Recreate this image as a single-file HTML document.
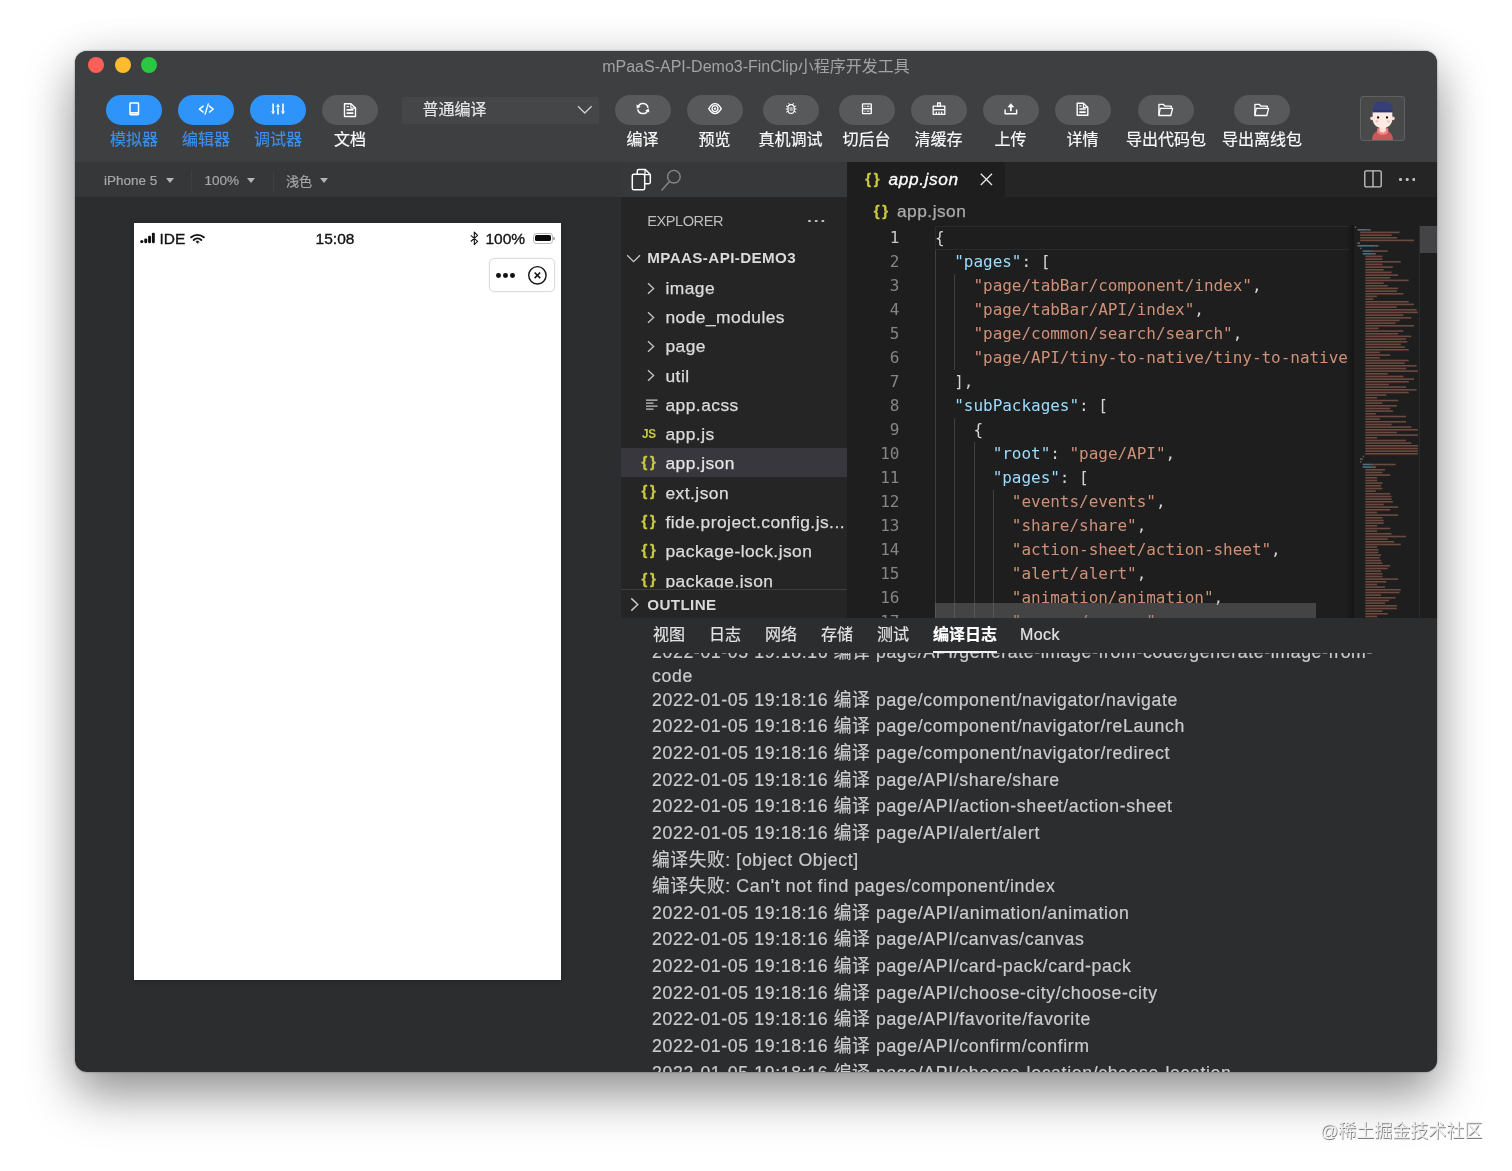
<!DOCTYPE html>
<html lang="zh-CN">
<head>
<meta charset="utf-8">
<title>mPaaS-API-Demo3-FinClip小程序开发工具</title>
<style>
*{box-sizing:border-box;margin:0;padding:0}
html,body{width:1512px;height:1171px;overflow:hidden;background:#fff}
body{position:relative;font-family:"Liberation Sans","Noto Sans CJK SC",sans-serif;-webkit-font-smoothing:antialiased}
.abs{position:absolute}
#shadow{position:absolute;left:75px;top:51px;width:1362px;height:1021px;border-radius:12px;
 box-shadow:0 23px 50px rgba(0,0,0,.40),0 4px 46px rgba(0,0,0,.09),0 0 2px rgba(0,0,0,.45)}
#win{position:absolute;left:75px;top:51px;width:1362px;height:1021px;border-radius:12px;overflow:hidden;background:#2c2d2f}
#in{position:absolute;left:-75px;top:-51px;width:1512px;height:1171px;will-change:transform}
.t{position:absolute;white-space:nowrap;line-height:1;transform:translateY(-50%)}
.tc{position:absolute;white-space:nowrap;line-height:1;transform:translate(-50%,-50%)}
/* toolbar */
#top{left:75px;top:51px;width:1362px;height:111px;background:#3e3f41}
.pill{position:absolute;top:95.3px;width:56.4px;height:29.9px;border-radius:15.2px;background:#58595b}
.pill.on{background:#2e94f9}
.pill svg{position:absolute;left:0;top:.3px;width:56px;height:29px;overflow:visible}
.lbl{font-size:16px;color:#fafafa;top:139.6px;-webkit-text-stroke:.2px}
.lbl.on{color:#3b8ee9}
/* code */
.ln{position:absolute;left:847px;width:52.5px;text-align:right;font:16px/24px "DejaVu Sans Mono","Liberation Mono",monospace;color:#858585;height:24px}
.cl{position:absolute;left:935px;font:16px/24px "DejaVu Sans Mono","Liberation Mono",monospace;color:#d4d4d4;height:24px;white-space:pre;letter-spacing:-0.03px}
.k{color:#9cdcfe}.s{color:#ce9178}
.ig{position:absolute;width:1px;background:#404040}
/* explorer */
.fi{position:absolute;left:665.5px;font-size:17.4px;letter-spacing:.45px;margin-top:.7px;-webkit-text-stroke:.25px #dcdcdc;color:#dcdcdc;white-space:nowrap;line-height:1;transform:translateY(-50%)}
.br{position:absolute;left:641.5px;font:bold 15px "Liberation Sans",sans-serif;color:#cbcb41;line-height:1;transform:translateY(-50%);letter-spacing:2.7px;white-space:nowrap;-webkit-text-stroke:.3px #cbcb41}
/* log */
.lg{position:absolute;left:652px;font-size:17.7px;letter-spacing:.63px;color:#cbcbcb;-webkit-text-stroke:.2px;white-space:nowrap;line-height:1;transform:translateY(-50%)}
.tab{font-size:16px;color:#e2e2e2;top:634.5px;-webkit-text-stroke:.2px}
</style>
</head>
<body>
<div id="shadow"></div>
<div id="win"><div id="in">
<!-- title bar + toolbar -->
<div class="abs" id="top"></div>
<div class="abs" style="left:88px;top:57px;width:16px;height:16px;border-radius:50%;background:#fe5f57"></div>
<div class="abs" style="left:114.5px;top:57px;width:16px;height:16px;border-radius:50%;background:#febc2e"></div>
<div class="abs" style="left:141px;top:57px;width:16px;height:16px;border-radius:50%;background:#28c840"></div>
<div class="tc" id="title" style="left:756px;top:66.5px;font-size:16px;color:#a2a3a5">mPaaS-API-Demo3-FinClip小程序开发工具</div>

<!-- left group -->
<div class="pill on" style="left:106px"><svg viewBox="0 0 56 29" fill="none" stroke="#fff" stroke-width="1.300"><rect x="24" y="7.100" width="8.500" height="11.600" rx="0.700" stroke-width="1.500"/><path d="M24 16.900h8.500" stroke-width="1.700"/></svg></div>
<div class="pill on" style="left:178px"><svg viewBox="0 0 56 29" fill="none" stroke="#fff" stroke-width="1.400" stroke-linecap="round" stroke-linejoin="round"><path d="M25.200 10.100 21.400 13.100 25.200 16.100M31.400 10.100 35.200 13.100 31.400 16.100M30.300 7.900 27.100 18.100"/></svg></div>
<div class="pill on" style="left:250px"><svg viewBox="0 0 56 29" fill="#fff" stroke="#fff" stroke-width="1.600"><path d="M23.100 7.500v7.500M28 11.300v7.300M33 7.500v7.500" fill="none"/><path d="M21.100 15.200h4L23.100 18.600zM31 15.200h4L33 18.600zM26 10.900h4L28 7.500z" stroke="none"/></svg></div>
<div class="pill" style="left:322px"><svg viewBox="0 0 56 29" fill="none" stroke="#fff" stroke-width="1.400" stroke-linejoin="round"><path d="M22.500 7.700h6.400l4.600 4.400v8.400H22.500z"/><path d="M28.900 7.700v4.400h4.600" stroke-width="1.100"/><path d="M24.600 10.600h2.200" stroke-width="1.300"/><path d="M24.600 13.900h6.800M24.600 17.200h6.800" stroke-width="1.700"/></svg></div>
<div class="tc lbl on" style="left:134px">模拟器</div>
<div class="tc lbl on" style="left:206px">编辑器</div>
<div class="tc lbl on" style="left:278px">调试器</div>
<div class="tc lbl" style="left:350px">文档</div>

<!-- dropdown -->
<div class="abs" style="left:402px;top:97px;width:197px;height:27px;background:#454648;border-radius:2px"></div>
<div class="t" style="left:422.5px;top:110px;font-size:16px;color:#e4e4e4;-webkit-text-stroke:.2px">普通编译</div>
<svg class="abs" style="left:576px;top:103px" width="18" height="14" viewBox="0 0 18 14" fill="none" stroke="#d0d0d0" stroke-width="1.3"><path d="M2 3.2 8.8 10 15.6 3.2"/></svg>
<!-- right group -->
<div class="pill" style="left:614.500px"><svg viewBox="0 0 56 29" fill="none" stroke="#fff" stroke-width="1.500"><g transform="translate(56.300,-0.600) scale(-1,1)"><path d="M23.300 12.500A5.200 5.200 0 0 1 33.300 11.600"/><path d="M33.500 13.900A5.200 5.200 0 0 1 23.500 14.800"/><path d="M34.900 9.200l-.5 4.200-3.700-2z" fill="#fff" stroke="none"/><path d="M21.900 17.200l.5-4.200 3.700 2z" fill="#fff" stroke="none"/></g></svg></div>
<div class="pill" style="left:686.500px"><svg viewBox="0 0 56 29" fill="none" stroke="#fff" stroke-width="1.400"><g transform="translate(-0.300,-0.300)"><path d="M22.100 12.900C24.100 9.300 26 7.900 28.300 7.900s4.200 1.400 6.200 5C32.500 16.500 30.600 17.900 28.300 17.900s-4.200-1.400-6.200-5z"/><circle cx="28.300" cy="12.900" r="3" stroke-width="1.300"/><circle cx="28.300" cy="12.900" r="1.200" fill="#fff" stroke="none"/></g></svg></div>
<div class="pill" style="left:762.500px"><svg viewBox="0 0 56 29" fill="none" stroke="#fff" stroke-width="1.300" stroke-linecap="round"><g transform="translate(28.100,13) scale(.86) translate(-28.200,-13.400)"><rect x="24.600" y="8.300" width="7.200" height="10.200" rx="3.600"/><path d="M26.500 8.400 25.500 6.900M29.900 8.400 30.900 6.900M24.500 10.900 22.700 10M24.500 13.400H22.400M24.500 15.900 22.700 17M31.900 10.900 33.700 10M31.900 13.400H34M31.900 15.900 33.700 17" stroke-width="1.100"/><path d="M26.800 12.300h2.800M26.800 14.500h2.800" stroke-width="1.100"/></g></svg></div>
<div class="pill" style="left:838.500px"><svg viewBox="0 0 56 29" fill="none" stroke="#fff" stroke-width="1.500" stroke-linejoin="round"><g transform="translate(27.900,12.700) scale(.9) translate(-28.050,-13)"><rect x="23.200" y="7.600" width="9.700" height="10.800" rx="0.600"/><path d="M23.200 13h9.700"/><path d="M25.300 10.300h1.200M28 10.300h2.800M25.300 15.700h1.200M28 15.700h2.800" stroke-width="1.100"/></g></svg></div>
<div class="pill" style="left:910.500px"><svg viewBox="0 0 56 29" fill="none" stroke="#fff" stroke-width="1.300" stroke-linejoin="round"><path d="M26.600 7h2.800v3.100h-2.800z"/><path d="M22.200 10.100h11.600v8.300H22.200z"/><path d="M22.200 13.700h11.600"/><path d="M25.300 15.700v2.700M28 15.700v2.700M30.700 15.700v2.700" stroke-width="1.200"/></svg></div>
<div class="pill" style="left:982.500px"><svg viewBox="0 0 56 29" fill="none" stroke="#fff" stroke-width="1.400" stroke-linejoin="round"><path d="M22.100 13.400v4.400h11.500v-4.400"/><path d="M27.850 15.200v-4.600" stroke-width="1.800"/><path d="M24.900 11 27.850 7.600l2.950 3.400z" fill="#fff" stroke-width="0.500"/></svg></div>
<div class="pill" style="left:1054.500px"><svg viewBox="0 0 56 29" fill="none" stroke="#fff" stroke-width="1.400" stroke-linejoin="round"><path d="M22.200 7.200h6.200l4.400 4.200v7.800H22.200z"/><path d="M28.400 7.200v4.200h4.400" stroke-width="1.100"/><path d="M24.300 10h2.200" stroke-width="1.300"/><path d="M24.300 13h6.400M24.300 16.100h6.400" stroke-width="1.700"/></svg></div>
<div class="pill" style="left:1138px"><svg viewBox="0 0 56 29" fill="none" stroke="#fff" stroke-width="1.300" stroke-linejoin="round"><path d="M20.900 19.200V8.300h4.300l1.800 1.900h6.300v2.200"/><path d="M20.900 19.500l1.300-7.100h12.400l-1.800 7.100z"/></svg></div>
<div class="pill" style="left:1234px"><svg viewBox="0 0 56 29" fill="none" stroke="#fff" stroke-width="1.300" stroke-linejoin="round"><path d="M20.900 19.200V8.300h4.300l1.800 1.900h6.300v2.200"/><path d="M20.900 19.500l1.300-7.100h12.400l-1.800 7.100z"/></svg></div>
<div class="tc lbl" style="left:642.500px">编译</div>
<div class="tc lbl" style="left:714.500px">预览</div>
<div class="tc lbl" style="left:790.500px">真机调试</div>
<div class="tc lbl" style="left:866.500px">切后台</div>
<div class="tc lbl" style="left:938.500px">清缓存</div>
<div class="tc lbl" style="left:1010.500px">上传</div>
<div class="tc lbl" style="left:1082.500px">详情</div>
<div class="tc lbl" style="left:1166px">导出代码包</div>
<div class="tc lbl" style="left:1262px">导出离线包</div>

<!-- avatar -->
<div class="abs" style="left:1360px;top:95.500px;width:45px;height:45px;background:#484949;border:1px solid #5f6061;border-radius:3px;overflow:hidden">
<svg class="abs" style="left:-1px;top:-1px" width="45" height="45" viewBox="0 0 45 45">
<path d="M12 45c0-6 2.300-9.300 6.500-10.300h8c4.200 1 6.500 4.300 6.500 10.300z" fill="#c95858"/>
<path d="M17.200 32.300h11v2.700c0 2.500-2.500 3.900-5.500 3.900s-5.500-1.400-5.500-3.900z" fill="#f38383"/>
<path d="M19.600 30.500h6.200v4c-.8 1.500-1.900 2.100-3.100 2.100s-2.300-.6-3.100-2.100z" fill="#fde2d8"/>
<circle cx="12.100" cy="22.300" r="1.900" fill="#f9d3c9"/><circle cx="32.900" cy="22.300" r="1.900" fill="#f9d3c9"/>
<path d="M12.700 15.500h19.600v7.200c0 5.800-4.400 9.500-9.800 9.500s-9.800-3.700-9.800-9.500z" fill="#fdeae3"/>
<path d="M13 16.200v-4.300c0-4.200 3.300-6.400 9.700-6.400s9.800 2.200 9.800 6.400v4.300z" fill="#373f7b"/>
<rect x="13" y="14.300" width="19.500" height="1.900" fill="#2d3570"/>
<circle cx="18.100" cy="21.500" r="1.150" fill="#1a1010"/><circle cx="27" cy="21.500" r="1.150" fill="#1a1010"/>
<circle cx="16.900" cy="25.100" r="1.500" fill="#f9c3c3"/><circle cx="28.400" cy="25.300" r="1.500" fill="#f9c3c3"/>
</svg></div>
<!-- sub bar + simulator -->
<div class="abs" style="left:75px;top:162px;width:546px;height:34.500px;background:#363739"></div>
<div class="t" id="sb1" style="left:104px;top:180.500px;font-size:13.500px;color:#a6a7a9;-webkit-text-stroke:.2px">iPhone 5</div>
<div class="abs" style="left:165.500px;top:178.300px;border:4.600px solid transparent;border-top:5.200px solid #b4b5b7;border-bottom:0"></div>
<div class="abs" style="left:190.500px;top:170px;width:1px;height:21px;background:#3e3f41"></div>
<div class="t" id="sb2" style="left:204.500px;top:180.500px;font-size:13.500px;color:#a6a7a9;-webkit-text-stroke:.2px">100%</div>
<div class="abs" style="left:246.500px;top:178.300px;border:4.600px solid transparent;border-top:5.200px solid #b4b5b7;border-bottom:0"></div>
<div class="abs" style="left:273px;top:170px;width:1px;height:21px;background:#3e3f41"></div>
<div class="t" id="sb3" style="left:286px;top:180.500px;font-size:13px;color:#a6a7a9;-webkit-text-stroke:.2px">浅色</div>
<div class="abs" style="left:319.500px;top:178.300px;border:4.600px solid transparent;border-top:5.200px solid #b4b5b7;border-bottom:0"></div>

<div class="abs" style="left:134.300px;top:223px;width:426.700px;height:756.500px;background:#fff;box-shadow:0 0 6px rgba(0,0,0,.25)"></div>
<!-- status bar -->
<svg class="abs" style="left:140px;top:232px" width="16" height="12" viewBox="0 0 16 12" fill="#111"><circle cx="1.800" cy="9.600" r="1.600"/><rect x="4.300" y="6.500" width="2.900" height="4.700" rx="1.100"/><rect x="8.100" y="3.800" width="2.900" height="7.400" rx="1.100"/><rect x="11.900" y="0.700" width="2.900" height="10.500" rx="1.100"/></svg>
<div class="t" id="ide" style="left:159.500px;top:239.300px;font-size:15.500px;color:#111;-webkit-text-stroke:.35px">IDE</div>
<svg class="abs" style="left:189.500px;top:233px" width="15" height="12" viewBox="0 0 15 12" fill="none" stroke="#111" stroke-width="1.900" stroke-linecap="round"><path d="M1.200 4.300C4.800 1 10.200 1 13.800 4.300"/><path d="M3.700 7C5.900 5 9.100 5 11.300 7"/><path d="M7.500 10.300l-1.600-1.700c.9-.8 2.300-.8 3.200 0z" fill="#111" stroke-width="0.500"/></svg>
<div class="tc" id="time" style="left:335px;top:239.300px;font-size:15.500px;color:#111;-webkit-text-stroke:.35px">15:08</div>
<svg class="abs" style="left:468.500px;top:230.500px" width="11" height="15" viewBox="0 0 11 15" fill="none" stroke="#111" stroke-width="1.100" stroke-linejoin="round"><path d="M1.800 4.300 8.600 10.400 5.300 13.700V1.100L8.600 4.400 1.800 10.500"/></svg>
<div class="t" id="pct" style="left:485.500px;top:239.300px;font-size:15.500px;color:#111;-webkit-text-stroke:.35px">100%</div>
<div class="abs" style="left:532.500px;top:233px;width:20.500px;height:10.500px;border:1.400px solid #b9b9b9;border-radius:3.200px"></div>
<div class="abs" style="left:534.600px;top:235.100px;width:16.300px;height:6.300px;background:#0a0a0a;border-radius:1.600px"></div>
<div class="abs" style="left:553.300px;top:236.500px;width:1.600px;height:3.600px;background:#b0b0b0;border-radius:0 1px 1px 0"></div>
<!-- capsule -->
<div class="abs" style="left:488.700px;top:258px;width:66px;height:34px;border:1px solid #dcdcdc;border-radius:5px;background:#fff;box-shadow:0 0 2px rgba(0,0,0,.08)"></div>
<div class="abs" style="left:495.800px;top:273.200px;width:4.800px;height:4.800px;border-radius:50%;background:#111"></div>
<div class="abs" style="left:503px;top:273.200px;width:4.800px;height:4.800px;border-radius:50%;background:#111"></div>
<div class="abs" style="left:510.200px;top:273.200px;width:4.800px;height:4.800px;border-radius:50%;background:#111"></div>
<svg class="abs" style="left:527px;top:265px" width="21" height="21" viewBox="0 0 21 21" fill="none" stroke="#111"><circle cx="10.400" cy="10.300" r="8.700" stroke-width="1.400"/><path d="M7.600 7.500l5.600 5.600M13.200 7.500l-5.600 5.600" stroke-width="1.500"/></svg>
<!-- activity bar + explorer -->
<div class="abs" style="left:620.500px;top:162px;width:226.500px;height:35px;background:#37383a"></div>
<div class="abs" style="left:620.500px;top:197px;width:226.500px;height:420.500px;background:#252526"></div>
<svg class="abs" style="left:630px;top:167px" width="24" height="26" viewBox="0 0 24 26" fill="none" stroke="#fff" stroke-width="1.500" stroke-linejoin="round"><path d="M7.300 7.200V3.900c0-.8.600-1.400 1.400-1.400h6.600l5 5v7.800c0 .8-.600 1.400-1.400 1.400h-4.200"/><path d="M15 2.700v5h5" stroke-width="1.300"/><rect x="2.300" y="7.200" width="12.400" height="15.600" rx="1.600"/></svg>
<svg class="abs" style="left:659px;top:167px" width="24" height="26" viewBox="0 0 24 26" fill="none" stroke="#868788" stroke-width="1.400"><circle cx="14.900" cy="9.700" r="6.300"/><path d="M10.500 14.500 2.500 23.500"/></svg>

<div class="t" id="expl" style="left:647.300px;top:221px;font-size:14.600px;color:#bdbdbd;letter-spacing:-0.480px">EXPLORER</div>
<div class="abs" style="left:808px;top:219.700px;width:2.600px;height:2.600px;border-radius:50%;background:#c4c4c4;box-shadow:6.700px 0 0 #c4c4c4,13.400px 0 0 #c4c4c4"></div>

<svg class="abs" style="left:626px;top:253px" width="16" height="12" viewBox="0 0 16 12" fill="none" stroke="#c8c8c8" stroke-width="1.300"><path d="M1.200 2.200 7.600 8.600 14 2.200"/></svg>
<div class="t" id="proj" style="left:647.300px;top:258.300px;font-size:15.200px;font-weight:bold;color:#dadada;letter-spacing:0.370px">MPAAS-API-DEMO3</div>

<div class="abs" style="left:620.500px;top:448.300px;width:226.500px;height:28.900px;background:#37373d"></div>

<svg class="abs chev" style="left:646px;top:281.500px" width="10" height="13" viewBox="0 0 10 13" fill="none" stroke="#c8c8c8" stroke-width="1.300"><path d="M2 1.200 7.600 6.500 2 11.800"/></svg>
<svg class="abs chev" style="left:646px;top:310.800px" width="10" height="13" viewBox="0 0 10 13" fill="none" stroke="#c8c8c8" stroke-width="1.300"><path d="M2 1.200 7.600 6.500 2 11.800"/></svg>
<svg class="abs chev" style="left:646px;top:340.100px" width="10" height="13" viewBox="0 0 10 13" fill="none" stroke="#c8c8c8" stroke-width="1.300"><path d="M2 1.200 7.600 6.500 2 11.800"/></svg>
<svg class="abs chev" style="left:646px;top:369.400px" width="10" height="13" viewBox="0 0 10 13" fill="none" stroke="#c8c8c8" stroke-width="1.300"><path d="M2 1.200 7.600 6.500 2 11.800"/></svg>
<svg class="abs" style="left:645px;top:398px" width="14" height="14" viewBox="0 0 14 14" fill="none" stroke="#c5c5c5" stroke-width="1.200"><path d="M1 2.200h11.500M1 5.200h7.500M1 8.200h11.500M1 11.200h7.500"/></svg>
<div class="t" style="left:641.800px;top:433.300px;font:bold 13.500px 'Liberation Sans',sans-serif;color:#cbcb41;letter-spacing:-0.200px;transform:translateY(-50%) scaleX(.87);transform-origin:0 50%">JS</div>

<div class="fi" style="top:288px">image</div>
<div class="fi" style="top:317.300px">node_modules</div>
<div class="fi" style="top:346.600px">page</div>
<div class="fi" style="top:375.900px">util</div>
<div class="fi" style="top:405.200px">app.acss</div>
<div class="fi" style="top:434.500px">app.js</div>
<div class="fi" style="top:463.800px;color:#e8e8e8">app.json</div>
<div class="fi" style="top:493.100px">ext.json</div>
<div class="fi" style="top:522.400px">fide.project.config.js...</div>
<div class="fi" style="top:551.700px">package-lock.json</div>
<div class="fi" style="top:581px;height:17px;overflow:hidden;transform:none;margin-top:-10px;line-height:20px">package.json</div>
<div class="br" style="top:460.900px">{}</div>
<div class="br" style="top:490.200px">{}</div>
<div class="br" style="top:519.500px">{}</div>
<div class="br" style="top:548.800px">{}</div>
<div class="br" style="top:578.100px">{}</div>

<div class="abs" style="left:620.500px;top:588.500px;width:226.500px;height:29px;background:#252526;border-top:1px solid #3d3d3e"></div>
<svg class="abs" style="left:629px;top:597px" width="11.500" height="15" viewBox="0 0 10 13" fill="none" stroke="#c8c8c8" stroke-width="1.300"><path d="M2 1.200 7.600 6.500 2 11.800"/></svg>
<div class="t" id="outl" style="left:647.300px;top:604.700px;font-size:15.200px;font-weight:bold;color:#dadada;letter-spacing:0.370px">OUTLINE</div>
<!-- editor -->
<div class="abs" style="left:847px;top:162px;width:590px;height:455.500px;background:#1e1e1e"></div>
<div class="abs" style="left:847px;top:162px;width:590px;height:35px;background:#252526"></div>
<div class="abs" style="left:847px;top:162px;width:158px;height:35px;background:#1e1e1e"></div>
<div class="t" style="left:865.300px;top:178.300px;font:bold 15px 'Liberation Sans',sans-serif;color:#cbcb41;letter-spacing:2.700px;-webkit-text-stroke:.3px #cbcb41">{}</div>
<div class="t" id="tabname" style="left:888.500px;top:179.600px;font-size:17.300px;font-style:italic;letter-spacing:.600px;color:#fff;-webkit-text-stroke:.3px">app.json</div>
<svg class="abs" style="left:979px;top:172px" width="15" height="15" viewBox="0 0 15 15" fill="none" stroke="#e8e8e8" stroke-width="1.300"><path d="M1.800 1.800 13 13M13 1.800 1.800 13"/></svg>
<svg class="abs" style="left:1363px;top:169px" width="20" height="20" viewBox="0 0 20 20" fill="none" stroke="#c8c8c8" stroke-width="1.300"><rect x="1.800" y="1.800" width="16.400" height="16" rx="1.200"/><path d="M10 1.800v16"/></svg>
<div class="abs" style="left:1399px;top:178.200px;width:2.600px;height:2.600px;border-radius:50%;background:#c4c4c4;box-shadow:6.700px 0 0 #c4c4c4,13.400px 0 0 #c4c4c4"></div>
<div class="t" style="left:873.700px;top:209.700px;font:bold 15px 'Liberation Sans',sans-serif;color:#cbcb41;letter-spacing:2.700px;-webkit-text-stroke:.3px #cbcb41">{}</div>
<div class="t" id="crumb" style="left:897px;top:212.300px;font-size:17.300px;letter-spacing:.500px;color:#ababab;-webkit-text-stroke:.25px">app.json</div>
<div class="abs" style="left:847px;top:225px;width:503px;height:393px;overflow:hidden"><div class="abs" style="left:-847px;top:-225px;width:1512px;height:700px">
<div class="abs" style="left:935px;top:225.500px;width:422px;height:24px;border:1px solid #2a2a2a"></div>
<div class="ig" style="left:935.0px;top:249.5px;height:384px"></div>
<div class="ig" style="left:954.3px;top:273.5px;height:96px"></div>
<div class="ig" style="left:954.3px;top:417.5px;height:216px"></div>
<div class="ig" style="left:973.5px;top:441.5px;height:192px"></div>
<div class="ig" style="left:992.8px;top:489.5px;height:144px"></div>
<div class="ln" style="top:225.5px;color:#c6c6c6">1</div>
<div class="cl" style="top:225.5px">{</div>
<div class="ln" style="top:249.5px;color:#858585">2</div>
<div class="cl" style="top:249.5px">  <span class="k">"pages"</span>: [</div>
<div class="ln" style="top:273.5px;color:#858585">3</div>
<div class="cl" style="top:273.5px">    <span class="s">"page/tabBar/component/index"</span>,</div>
<div class="ln" style="top:297.5px;color:#858585">4</div>
<div class="cl" style="top:297.5px">    <span class="s">"page/tabBar/API/index"</span>,</div>
<div class="ln" style="top:321.5px;color:#858585">5</div>
<div class="cl" style="top:321.5px">    <span class="s">"page/common/search/search"</span>,</div>
<div class="ln" style="top:345.5px;color:#858585">6</div>
<div class="cl" style="top:345.5px">    <span class="s">"page/API/tiny-to-native/tiny-to-native"</span></div>
<div class="ln" style="top:369.5px;color:#858585">7</div>
<div class="cl" style="top:369.5px">  ],</div>
<div class="ln" style="top:393.5px;color:#858585">8</div>
<div class="cl" style="top:393.5px">  <span class="k">"subPackages"</span>: [</div>
<div class="ln" style="top:417.5px;color:#858585">9</div>
<div class="cl" style="top:417.5px">    {</div>
<div class="ln" style="top:441.5px;color:#858585">10</div>
<div class="cl" style="top:441.5px">      <span class="k">"root"</span>: <span class="s">"page/API"</span>,</div>
<div class="ln" style="top:465.5px;color:#858585">11</div>
<div class="cl" style="top:465.5px">      <span class="k">"pages"</span>: [</div>
<div class="ln" style="top:489.5px;color:#858585">12</div>
<div class="cl" style="top:489.5px">        <span class="s">"events/events"</span>,</div>
<div class="ln" style="top:513.5px;color:#858585">13</div>
<div class="cl" style="top:513.5px">        <span class="s">"share/share"</span>,</div>
<div class="ln" style="top:537.5px;color:#858585">14</div>
<div class="cl" style="top:537.5px">        <span class="s">"action-sheet/action-sheet"</span>,</div>
<div class="ln" style="top:561.5px;color:#858585">15</div>
<div class="cl" style="top:561.5px">        <span class="s">"alert/alert"</span>,</div>
<div class="ln" style="top:585.5px;color:#858585">16</div>
<div class="cl" style="top:585.5px">        <span class="s">"animation/animation"</span>,</div>
<div class="ln" style="top:609.5px;color:#858585">17</div>
<div class="cl" style="top:609.5px">        <span class="s">"canvas/canvas"</span>,</div>
</div></div>
<div class="abs" style="left:935px;top:602.500px;width:381px;height:15.500px;background:rgba(121,121,121,.42)"></div>
<div class="abs" style="left:1346px;top:225px;width:8px;height:393px;background:linear-gradient(90deg,rgba(0,0,0,0),rgba(0,0,0,.28))"></div>
<svg class="abs" style="left:1354px;top:225px" width="65" height="393" viewBox="0 0 65 393">
<rect x="0.8" y="1.3" width="1.3" height="1.600" fill="#626262"/>
<rect x="3.4" y="4.0" width="9.2" height="1.600" fill="#4e6f80"/>
<rect x="12.6" y="4.0" width="3.9" height="1.600" fill="#626262"/>
<rect x="6.1" y="6.6" width="39.4" height="1.600" fill="#6b4a3f"/>
<rect x="6.1" y="9.3" width="31.6" height="1.600" fill="#6b4a3f"/>
<rect x="6.1" y="12.0" width="36.8" height="1.600" fill="#6b4a3f"/>
<rect x="6.1" y="14.6" width="53.9" height="1.600" fill="#6b4a3f"/>
<rect x="3.4" y="17.3" width="2.6" height="1.600" fill="#626262"/>
<rect x="3.4" y="20.0" width="17.1" height="1.600" fill="#4e6f80"/>
<rect x="20.5" y="20.0" width="3.9" height="1.600" fill="#626262"/>
<rect x="6.1" y="22.6" width="1.3" height="1.600" fill="#626262"/>
<rect x="8.7" y="25.3" width="7.9" height="1.600" fill="#4e6f80"/>
<rect x="16.6" y="25.3" width="2.6" height="1.600" fill="#626262"/>
<rect x="19.2" y="25.3" width="14.5" height="1.600" fill="#6b4a3f"/>
<rect x="8.7" y="28.0" width="9.2" height="1.600" fill="#4e6f80"/>
<rect x="17.9" y="28.0" width="3.9" height="1.600" fill="#626262"/>
<rect x="11.3" y="30.6" width="17.1" height="1.600" fill="#6b4a3f"/>
<rect x="11.3" y="33.3" width="17.1" height="1.600" fill="#6b4a3f"/>
<rect x="11.3" y="36.0" width="35.5" height="1.600" fill="#6b4a3f"/>
<rect x="11.3" y="38.6" width="17.1" height="1.600" fill="#6b4a3f"/>
<rect x="11.3" y="41.3" width="27.6" height="1.600" fill="#6b4a3f"/>
<rect x="11.3" y="44.0" width="18.4" height="1.600" fill="#6b4a3f"/>
<rect x="11.3" y="46.6" width="26.3" height="1.600" fill="#6b4a3f"/>
<rect x="11.3" y="49.3" width="32.9" height="1.600" fill="#6b4a3f"/>
<rect x="11.3" y="52.0" width="25.0" height="1.600" fill="#6b4a3f"/>
<rect x="11.3" y="54.6" width="43.4" height="1.600" fill="#6b4a3f"/>
<rect x="11.3" y="57.3" width="18.4" height="1.600" fill="#6b4a3f"/>
<rect x="11.3" y="60.0" width="22.4" height="1.600" fill="#6b4a3f"/>
<rect x="11.3" y="62.6" width="32.9" height="1.600" fill="#6b4a3f"/>
<rect x="11.3" y="65.3" width="31.6" height="1.600" fill="#6b4a3f"/>
<rect x="11.3" y="68.0" width="38.1" height="1.600" fill="#6b4a3f"/>
<rect x="11.3" y="70.6" width="11.8" height="1.600" fill="#6b4a3f"/>
<rect x="11.3" y="73.3" width="7.9" height="1.600" fill="#6b4a3f"/>
<rect x="11.3" y="76.0" width="43.4" height="1.600" fill="#6b4a3f"/>
<rect x="11.3" y="78.6" width="48.7" height="1.600" fill="#6b4a3f"/>
<rect x="11.3" y="81.3" width="31.6" height="1.600" fill="#6b4a3f"/>
<rect x="11.3" y="84.0" width="51.3" height="1.600" fill="#6b4a3f"/>
<rect x="11.3" y="86.6" width="52.6" height="1.600" fill="#6b4a3f"/>
<rect x="11.3" y="89.3" width="38.1" height="1.600" fill="#6b4a3f"/>
<rect x="11.3" y="92.0" width="46.0" height="1.600" fill="#6b4a3f"/>
<rect x="11.3" y="94.6" width="34.2" height="1.600" fill="#6b4a3f"/>
<rect x="11.3" y="97.3" width="30.2" height="1.600" fill="#6b4a3f"/>
<rect x="11.3" y="100.0" width="48.7" height="1.600" fill="#6b4a3f"/>
<rect x="11.3" y="102.6" width="13.1" height="1.600" fill="#6b4a3f"/>
<rect x="11.3" y="105.3" width="38.1" height="1.600" fill="#6b4a3f"/>
<rect x="11.3" y="108.0" width="32.9" height="1.600" fill="#6b4a3f"/>
<rect x="11.3" y="110.6" width="46.0" height="1.600" fill="#6b4a3f"/>
<rect x="11.3" y="113.3" width="40.8" height="1.600" fill="#6b4a3f"/>
<rect x="11.3" y="116.0" width="42.1" height="1.600" fill="#6b4a3f"/>
<rect x="11.3" y="118.6" width="35.5" height="1.600" fill="#6b4a3f"/>
<rect x="11.3" y="121.3" width="39.4" height="1.600" fill="#6b4a3f"/>
<rect x="11.3" y="124.0" width="43.4" height="1.600" fill="#6b4a3f"/>
<rect x="11.3" y="126.6" width="14.5" height="1.600" fill="#6b4a3f"/>
<rect x="11.3" y="129.3" width="25.0" height="1.600" fill="#6b4a3f"/>
<rect x="11.3" y="132.0" width="14.5" height="1.600" fill="#6b4a3f"/>
<rect x="11.3" y="134.7" width="43.4" height="1.600" fill="#6b4a3f"/>
<rect x="11.3" y="137.3" width="39.4" height="1.600" fill="#6b4a3f"/>
<rect x="11.3" y="140.0" width="51.3" height="1.600" fill="#6b4a3f"/>
<rect x="11.3" y="142.7" width="40.8" height="1.600" fill="#6b4a3f"/>
<rect x="11.3" y="145.3" width="52.6" height="1.600" fill="#6b4a3f"/>
<rect x="11.3" y="148.0" width="22.4" height="1.600" fill="#6b4a3f"/>
<rect x="11.3" y="150.7" width="38.1" height="1.600" fill="#6b4a3f"/>
<rect x="11.3" y="153.3" width="48.7" height="1.600" fill="#6b4a3f"/>
<rect x="11.3" y="156.0" width="43.4" height="1.600" fill="#6b4a3f"/>
<rect x="11.3" y="158.7" width="23.7" height="1.600" fill="#6b4a3f"/>
<rect x="11.3" y="161.3" width="40.8" height="1.600" fill="#6b4a3f"/>
<rect x="11.3" y="164.0" width="51.3" height="1.600" fill="#6b4a3f"/>
<rect x="11.3" y="166.7" width="43.4" height="1.600" fill="#6b4a3f"/>
<rect x="11.3" y="169.3" width="21.0" height="1.600" fill="#6b4a3f"/>
<rect x="11.3" y="172.0" width="11.8" height="1.600" fill="#6b4a3f"/>
<rect x="11.3" y="174.7" width="32.9" height="1.600" fill="#6b4a3f"/>
<rect x="11.3" y="177.3" width="17.1" height="1.600" fill="#6b4a3f"/>
<rect x="11.3" y="180.0" width="31.6" height="1.600" fill="#6b4a3f"/>
<rect x="11.3" y="182.7" width="25.0" height="1.600" fill="#6b4a3f"/>
<rect x="11.3" y="185.3" width="27.6" height="1.600" fill="#6b4a3f"/>
<rect x="11.3" y="188.0" width="10.5" height="1.600" fill="#6b4a3f"/>
<rect x="11.3" y="190.7" width="40.8" height="1.600" fill="#6b4a3f"/>
<rect x="11.3" y="193.3" width="14.5" height="1.600" fill="#6b4a3f"/>
<rect x="11.3" y="196.0" width="40.8" height="1.600" fill="#6b4a3f"/>
<rect x="11.3" y="198.7" width="26.3" height="1.600" fill="#6b4a3f"/>
<rect x="11.3" y="201.3" width="46.0" height="1.600" fill="#6b4a3f"/>
<rect x="11.3" y="204.0" width="52.6" height="1.600" fill="#6b4a3f"/>
<rect x="11.3" y="206.7" width="31.6" height="1.600" fill="#6b4a3f"/>
<rect x="11.3" y="209.3" width="52.6" height="1.600" fill="#6b4a3f"/>
<rect x="11.3" y="212.0" width="11.8" height="1.600" fill="#6b4a3f"/>
<rect x="11.3" y="214.7" width="40.8" height="1.600" fill="#6b4a3f"/>
<rect x="11.3" y="217.3" width="46.0" height="1.600" fill="#6b4a3f"/>
<rect x="11.3" y="220.0" width="52.6" height="1.600" fill="#6b4a3f"/>
<rect x="11.3" y="222.7" width="52.6" height="1.600" fill="#6b4a3f"/>
<rect x="11.3" y="225.3" width="52.6" height="1.600" fill="#6b4a3f"/>
<rect x="11.3" y="228.0" width="52.6" height="1.600" fill="#6b4a3f"/>
<rect x="8.7" y="230.7" width="1.3" height="1.600" fill="#626262"/>
<rect x="6.1" y="233.3" width="2.6" height="1.600" fill="#626262"/>
<rect x="6.1" y="236.0" width="1.3" height="1.600" fill="#626262"/>
<rect x="8.7" y="238.7" width="7.9" height="1.600" fill="#4e6f80"/>
<rect x="16.6" y="238.7" width="2.6" height="1.600" fill="#626262"/>
<rect x="19.2" y="238.7" width="22.4" height="1.600" fill="#6b4a3f"/>
<rect x="8.7" y="241.3" width="9.2" height="1.600" fill="#4e6f80"/>
<rect x="17.9" y="241.3" width="3.9" height="1.600" fill="#626262"/>
<rect x="11.3" y="244.0" width="19.7" height="1.600" fill="#6b4a3f"/>
<rect x="11.3" y="246.7" width="17.1" height="1.600" fill="#6b4a3f"/>
<rect x="11.3" y="249.3" width="25.0" height="1.600" fill="#6b4a3f"/>
<rect x="11.3" y="252.0" width="11.8" height="1.600" fill="#6b4a3f"/>
<rect x="11.3" y="254.7" width="11.8" height="1.600" fill="#6b4a3f"/>
<rect x="11.3" y="257.3" width="17.1" height="1.600" fill="#6b4a3f"/>
<rect x="11.3" y="260.0" width="15.8" height="1.600" fill="#6b4a3f"/>
<rect x="11.3" y="262.7" width="17.1" height="1.600" fill="#6b4a3f"/>
<rect x="11.3" y="265.3" width="10.5" height="1.600" fill="#6b4a3f"/>
<rect x="11.3" y="268.0" width="25.0" height="1.600" fill="#6b4a3f"/>
<rect x="11.3" y="270.7" width="26.3" height="1.600" fill="#6b4a3f"/>
<rect x="11.3" y="273.3" width="26.3" height="1.600" fill="#6b4a3f"/>
<rect x="11.3" y="276.0" width="27.6" height="1.600" fill="#6b4a3f"/>
<rect x="11.3" y="278.7" width="18.4" height="1.600" fill="#6b4a3f"/>
<rect x="11.3" y="281.3" width="32.9" height="1.600" fill="#6b4a3f"/>
<rect x="11.3" y="284.0" width="25.0" height="1.600" fill="#6b4a3f"/>
<rect x="11.3" y="286.7" width="11.8" height="1.600" fill="#6b4a3f"/>
<rect x="11.3" y="289.3" width="32.9" height="1.600" fill="#6b4a3f"/>
<rect x="11.3" y="292.0" width="17.1" height="1.600" fill="#6b4a3f"/>
<rect x="11.3" y="294.7" width="18.4" height="1.600" fill="#6b4a3f"/>
<rect x="11.3" y="297.3" width="18.4" height="1.600" fill="#6b4a3f"/>
<rect x="11.3" y="300.0" width="11.8" height="1.600" fill="#6b4a3f"/>
<rect x="11.3" y="302.7" width="25.0" height="1.600" fill="#6b4a3f"/>
<rect x="11.3" y="305.3" width="11.8" height="1.600" fill="#6b4a3f"/>
<rect x="11.3" y="308.0" width="26.3" height="1.600" fill="#6b4a3f"/>
<rect x="11.3" y="310.7" width="40.8" height="1.600" fill="#6b4a3f"/>
<rect x="11.3" y="313.3" width="22.4" height="1.600" fill="#6b4a3f"/>
<rect x="11.3" y="316.0" width="28.9" height="1.600" fill="#6b4a3f"/>
<rect x="11.3" y="318.7" width="35.5" height="1.600" fill="#6b4a3f"/>
<rect x="11.3" y="321.3" width="11.8" height="1.600" fill="#6b4a3f"/>
<rect x="11.3" y="324.0" width="13.1" height="1.600" fill="#6b4a3f"/>
<rect x="11.3" y="326.7" width="13.1" height="1.600" fill="#6b4a3f"/>
<rect x="11.3" y="329.3" width="15.8" height="1.600" fill="#6b4a3f"/>
<rect x="11.3" y="332.0" width="14.5" height="1.600" fill="#6b4a3f"/>
<rect x="11.3" y="334.7" width="15.8" height="1.600" fill="#6b4a3f"/>
<rect x="11.3" y="337.3" width="17.1" height="1.600" fill="#6b4a3f"/>
<rect x="11.3" y="340.0" width="25.0" height="1.600" fill="#6b4a3f"/>
<rect x="11.3" y="342.7" width="22.4" height="1.600" fill="#6b4a3f"/>
<rect x="11.3" y="345.3" width="15.8" height="1.600" fill="#6b4a3f"/>
<rect x="11.3" y="348.0" width="17.1" height="1.600" fill="#6b4a3f"/>
<rect x="11.3" y="350.7" width="17.1" height="1.600" fill="#6b4a3f"/>
<rect x="11.3" y="353.3" width="32.9" height="1.600" fill="#6b4a3f"/>
<rect x="11.3" y="356.0" width="21.0" height="1.600" fill="#6b4a3f"/>
<rect x="11.3" y="358.7" width="11.8" height="1.600" fill="#6b4a3f"/>
<rect x="11.3" y="361.3" width="19.7" height="1.600" fill="#6b4a3f"/>
<rect x="11.3" y="364.0" width="35.5" height="1.600" fill="#6b4a3f"/>
<rect x="11.3" y="366.7" width="34.2" height="1.600" fill="#6b4a3f"/>
<rect x="11.3" y="369.3" width="15.8" height="1.600" fill="#6b4a3f"/>
<rect x="11.3" y="372.0" width="30.2" height="1.600" fill="#6b4a3f"/>
<rect x="11.3" y="374.7" width="23.7" height="1.600" fill="#6b4a3f"/>
<rect x="11.3" y="377.3" width="19.7" height="1.600" fill="#6b4a3f"/>
<rect x="11.3" y="380.0" width="31.6" height="1.600" fill="#6b4a3f"/>
<rect x="11.3" y="382.7" width="31.6" height="1.600" fill="#6b4a3f"/>
<rect x="11.3" y="385.3" width="17.1" height="1.600" fill="#6b4a3f"/>
<rect x="11.3" y="388.0" width="22.4" height="1.600" fill="#6b4a3f"/>
<rect x="11.3" y="390.7" width="11.8" height="1.600" fill="#6b4a3f"/>
</svg>
<div class="abs" style="left:1419px;top:225px;width:1px;height:393px;background:#2c2c2d"></div>
<div class="abs" style="left:1419.500px;top:226px;width:18px;height:26.800px;background:#444446"></div>
<!-- bottom panel -->
<div class="abs" style="left:620.500px;top:617.500px;width:816.500px;height:455px;background:#2c2d2f"></div>
<div class="abs" style="left:621px;top:653px;width:816px;height:419px;overflow:hidden"><div class="abs" style="left:-621px;top:-653px;width:1512px;height:1171px">
<div class="lg" style="top:653.3px">2022-01-05 19:18:16 编译 page/API/generate-image-from-code/generate-image-from-</div>
<div class="lg" style="top:676.8px">code</div>
<div class="lg" style="top:700.7px">2022-01-05 19:18:16 编译 page/component/navigator/navigate</div>
<div class="lg" style="top:727.3px">2022-01-05 19:18:16 编译 page/component/navigator/reLaunch</div>
<div class="lg" style="top:754.0px">2022-01-05 19:18:16 编译 page/component/navigator/redirect</div>
<div class="lg" style="top:780.6px">2022-01-05 19:18:16 编译 page/API/share/share</div>
<div class="lg" style="top:807.2px">2022-01-05 19:18:16 编译 page/API/action-sheet/action-sheet</div>
<div class="lg" style="top:833.9px">2022-01-05 19:18:16 编译 page/API/alert/alert</div>
<div class="lg" style="top:860.5px">编译失败: [object Object]</div>
<div class="lg" style="top:887.1px">编译失败: Can't not find pages/component/index</div>
<div class="lg" style="top:913.7px">2022-01-05 19:18:16 编译 page/API/animation/animation</div>
<div class="lg" style="top:940.4px">2022-01-05 19:18:16 编译 page/API/canvas/canvas</div>
<div class="lg" style="top:967.0px">2022-01-05 19:18:16 编译 page/API/card-pack/card-pack</div>
<div class="lg" style="top:993.6px">2022-01-05 19:18:16 编译 page/API/choose-city/choose-city</div>
<div class="lg" style="top:1020.3px">2022-01-05 19:18:16 编译 page/API/favorite/favorite</div>
<div class="lg" style="top:1046.9px">2022-01-05 19:18:16 编译 page/API/confirm/confirm</div>
<div class="lg" style="top:1073.5px">2022-01-05 19:18:16 编译 page/API/choose-location/choose-location</div>
</div></div>
<div class="t tab" style="left:653px">视图</div>
<div class="t tab" style="left:709px">日志</div>
<div class="t tab" style="left:765px">网络</div>
<div class="t tab" style="left:821px">存储</div>
<div class="t tab" style="left:877px">测试</div>
<div class="t tab" style="left:933px;font-weight:bold;color:#fff">编译日志</div>
<div class="t tab" id="mock" style="left:1020px;letter-spacing:.4px">Mock</div>
<div class="abs" style="left:933px;top:651.400px;width:64px;height:1.700px;background:#f2f2f2"></div>
</div></div>
<!-- watermark -->
<div class="t" id="wm" style="left:1320px;top:1131.300px;font-size:18px;color:#ececec;will-change:transform;text-shadow:.8px .8px .6px rgba(95,95,95,.8)">@稀土掘金技术社区</div>
</body>
</html>
